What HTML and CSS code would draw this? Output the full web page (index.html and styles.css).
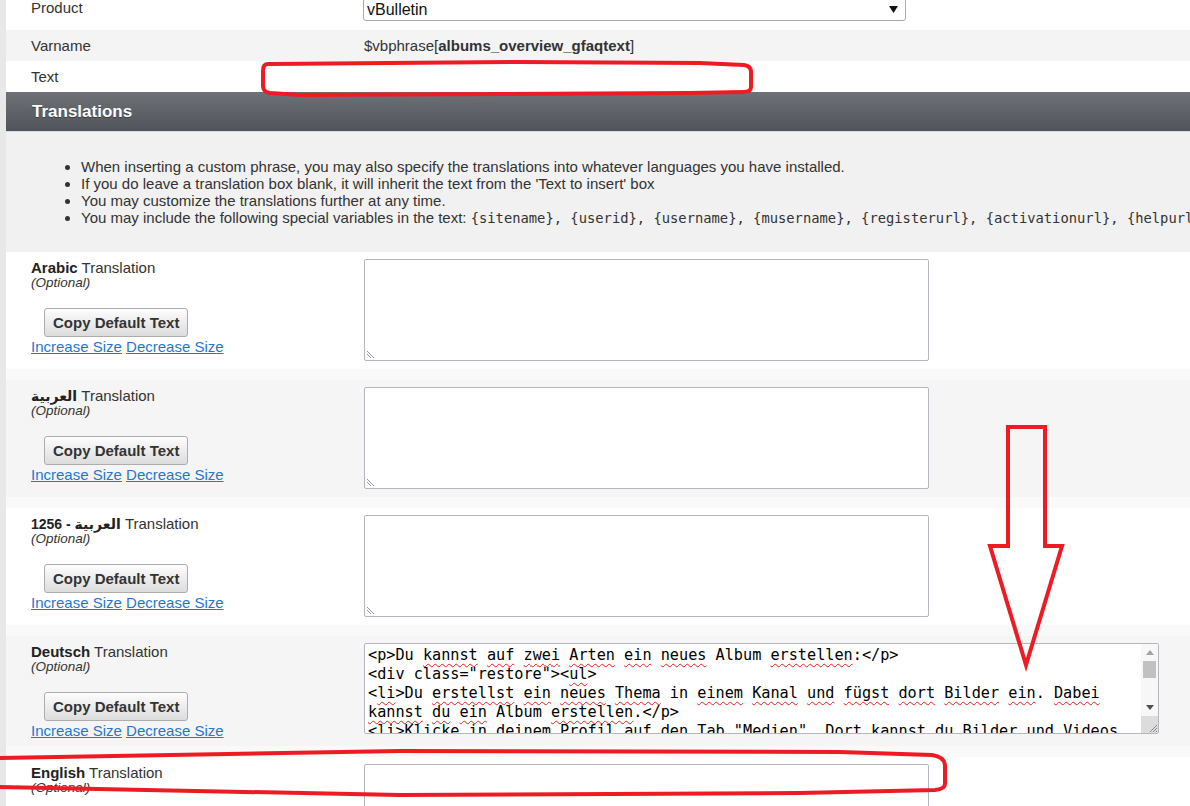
FILE: index.html
```html
<!DOCTYPE html>
<html lang="en">
<head>
<meta charset="utf-8">
<title>Add Phrase</title>
<link rel="stylesheet" href="styles.css">
</head>
<body>
<div class="page">
  <div class="frow product">
    <div class="lbl">Product</div>
    <div class="val">
      <div class="select"><span>vBulletin</span><svg class="caret" width="9" height="7" viewBox="0 0 9 7"><path d="M0 0 H9 L4.5 7 Z" fill="#111"/></svg></div>
    </div>
  </div>
  <div class="frow alt">
    <div class="lbl">Varname</div>
    <div class="val">$vbphrase[<b>albums_overview_gfaqtext</b>]</div>
  </div>
  <div class="frow">
    <div class="lbl">Text</div>
    <div class="val"></div>
  </div>

  <div class="header">Translations</div>

  <div class="desc">
    <ul>
      <li>When inserting a custom phrase, you may also specify the translations into whatever languages you have installed.</li>
      <li>If you do leave a translation box blank, it will inherit the text from the 'Text to insert' box</li>
      <li>You may customize the translations further at any time.</li>
      <li>You may include the following special variables in the text: <code>{sitename}, {userid}, {username}, {musername}, {registerurl}, {activationurl}, {helpurl}, {contactusurl}</code></li>
    </ul>
  </div>

  <div class="trow">
    <div class="tlabel">
      <div class="name"><b>Arabic</b> Translation</div>
      <div class="opt">(Optional)</div>
      <button class="copy" type="button">Copy Default Text</button>
      <div class="links"><a href="#">Increase Size</a> <a href="#">Decrease Size</a></div>
    </div>
    <div class="tval">
      <div class="ta rtl"><svg class="grip-l" width="8" height="7" viewBox="0 0 8 7"><path d="M0 0 L7 7 M0 3 L4 7" stroke="#9a9a9a" stroke-width="1"/></svg></div>
    </div>
  </div>

  <div class="trow alt">
    <div class="tlabel">
      <div class="name"><b class="ar">العربية</b> Translation</div>
      <div class="opt">(Optional)</div>
      <button class="copy" type="button">Copy Default Text</button>
      <div class="links"><a href="#">Increase Size</a> <a href="#">Decrease Size</a></div>
    </div>
    <div class="tval">
      <div class="ta rtl"><svg class="grip-l" width="8" height="7" viewBox="0 0 8 7"><path d="M0 0 L7 7 M0 3 L4 7" stroke="#9a9a9a" stroke-width="1"/></svg></div>
    </div>
  </div>

  <div class="trow">
    <div class="tlabel">
      <div class="name"><b class="ar">العربية - 1256</b> Translation</div>
      <div class="opt">(Optional)</div>
      <button class="copy" type="button">Copy Default Text</button>
      <div class="links"><a href="#">Increase Size</a> <a href="#">Decrease Size</a></div>
    </div>
    <div class="tval">
      <div class="ta rtl"><svg class="grip-l" width="8" height="7" viewBox="0 0 8 7"><path d="M0 0 L7 7 M0 3 L4 7" stroke="#9a9a9a" stroke-width="1"/></svg></div>
    </div>
  </div>

  <div class="trow alt">
    <div class="tlabel">
      <div class="name"><b>Deutsch</b> Translation</div>
      <div class="opt">(Optional)</div>
      <button class="copy" type="button">Copy Default Text</button>
      <div class="links"><a href="#">Increase Size</a> <a href="#">Decrease Size</a></div>
    </div>
    <div class="tval">
      <div class="ta wide">
        <div class="code">&lt;p&gt;Du <s>kannst</s> <s>auf</s> <s>zwei</s> <s>Arten</s> <s>ein</s> <s>neues</s> Album <s>erstellen</s>:&lt;/p&gt;
&lt;div class="restore"&gt;&lt;<s>ul</s>&gt;
&lt;<s>li</s>&gt;Du <s>erstellst</s> <s>ein</s> <s>neues</s> <s>Thema</s> in <s>einem</s> <s>Kanal</s> <s>und</s> <s>fügst</s> <s>dort</s> <s>Bilder</s> <s>ein</s>. <s>Dabei</s>
<s>kannst</s> <s>du</s> <s>ein</s> Album <s>erstellen</s>.&lt;/p&gt;
&lt;<s>li</s>&gt;<s>Klicke</s> in <s>deinem</s> <s>Profil</s> <s>auf</s> <s>den</s> Tab "<s>Medien</s>". Dort <s>kannst</s> <s>du</s> <s>Bilder</s> <s>und</s> <s>Videos</s></div>
        <div class="sbar">
          <div class="sbtn"><svg width="8" height="5" viewBox="0 0 8 5"><path d="M4 0 L8 5 H0 Z" fill="#a3a3a3"/></svg></div>
          <div class="strack"><div class="sthumb"></div></div>
          <div class="sbtn"><svg width="8" height="5" viewBox="0 0 8 5"><path d="M0 0 H8 L4 5 Z" fill="#505050"/></svg></div>
          <div class="scorner"><svg width="10" height="10" viewBox="0 0 10 10"><path d="M9 2 L2 9 M9 5 L5 9 M9 8 L8 9" stroke="#8a8a8a" stroke-width="1"/></svg></div>
        </div>
      </div>
    </div>
  </div>

  <div class="trow">
    <div class="tlabel">
      <div class="name"><b>English</b> Translation</div>
      <div class="opt">(Optional)</div>
      <button class="copy" type="button">Copy Default Text</button>
      <div class="links"><a href="#">Increase Size</a> <a href="#">Decrease Size</a></div>
    </div>
    <div class="tval">
      <div class="ta"></div>
    </div>
  </div>
</div>

<svg class="marks" width="1190" height="806" viewBox="0 0 1190 806">
  <g fill="none" stroke="#ed1c24" stroke-width="4" stroke-linejoin="round">
    <path d="M268 64 L520 62 L700 63 L744 65 Q751 66 751 72 L751 87 Q751 92 744 92 L690 93 L300 95 L270 93 Q263 92 263 86 L263 71 Q263 64 268 64 Z"/>
    <path d="M1008 427 L1045 427 L1045 546 L1062 546 L1026 665 L990 546 L1008 546 Z" stroke-linejoin="miter"/>
    <path d="M-6 758 L400 751 L840 752 L932 755 Q945 757 945 766 L945 784 Q945 789 935 790 L800 793 L400 795 L-6 787"/>
  </g>
</svg>
</body>
</html>
```
FILE: styles.css
```css
html {
  overflow: hidden;
}
body {
  margin: 0;
  background: #e8e8e8;
  font-family: "Liberation Sans", Arial, "DejaVu Sans", sans-serif;
  font-size: 15px;
  color: #333;
  position: relative;
  width: 1190px;
  height: 806px;
}
.page {
  margin-left: 6px;
  margin-top: -10px;
  background: #fff;
}

/* top form rows */
.frow {
  display: grid;
  grid-template-columns: 350px 1fr;
  align-items: center;
  height: 31px;
  background: #fff;
}
.frow.alt {
  background: #f4f4f4;
}
.frow .lbl {
  padding-left: 25px;
  line-height: 17px;
}
.frow .val {
  padding-left: 8px;
  line-height: 17px;
  color: #333;
}
.frow.product {
  height: 40px;
  align-items: start;
}
.frow.product .lbl {
  padding-top: 9px;
}
.select {
  margin-top: 8px;
  margin-left: -1px;
  width: 543px;
  height: 23px;
  box-sizing: border-box;
  border: 1px solid #a9a9a9;
  border-radius: 3px;
  background: #fff;
  display: flex;
  align-items: center;
  justify-content: space-between;
  padding: 0 7px 0 3px;
  color: #111;
  font-size: 16px;
}

/* header */
.header {
  height: 40px;
  line-height: 40px;
  padding-left: 26px;
  background: linear-gradient(#6e7176, #50535a);
  color: #fff;
  font-weight: bold;
  font-size: 17px;
  text-shadow: 0 1px 0 #3a3c40;
  border-bottom: 1px solid #d9dadc;
  box-sizing: border-box;
}

/* description */
.desc {
  background: #f1f1f1;
  height: 120px;
  box-sizing: border-box;
  padding: 26px 0 0 35px;
  overflow: hidden;
  white-space: nowrap;
}
.desc ul {
  margin: 0;
  padding-left: 40px;
  line-height: 17px;
  color: #333;
}
.desc code {
  font-family: "DejaVu Sans Mono", "Liberation Mono", monospace;
  font-size: 13.8px;
}

/* translation rows */
.trow {
  display: grid;
  grid-template-columns: 350px 1fr;
  background: #fff;
  border-bottom: 11px solid #f9f9f9;
}
.trow.alt {
  background: #f5f5f5;
}
.tlabel {
  padding: 8px 8px 7px 25px;
}
.tlabel .name {
  height: 15px;
  line-height: 15px;
  color: #333;
  white-space: nowrap;
}
.tlabel .name b {
  color: #222;
}
.tlabel .name b.ar {
  font-size: 14px;
}
.tlabel .opt {
  font-style: italic;
  font-size: 13.5px;
  line-height: 15px;
  color: #333;
}
.copy {
  display: block;
  margin: 18px 0 1px 13px;
  height: 29px;
  padding: 0 8px;
  border: 1px solid #adadad;
  border-radius: 3px;
  background: linear-gradient(#fdfdfd, #dcdcdc);
  font-family: "Liberation Sans", Arial, sans-serif;
  font-weight: bold;
  font-size: 15px;
  color: #333;
}
.links {
  line-height: 17px;
}
.links a {
  color: #1f78d1;
  text-decoration: underline;
}
.tval {
  padding: 7px 8px 8px 8px;
}
.ta {
  position: relative;
  width: 565px;
  height: 102px;
  box-sizing: border-box;
  border: 1px solid #b6b6be;
  border-radius: 2px;
  background: #fff;
  overflow: hidden;
}
.grip-l {
  position: absolute;
  left: 2px;
  bottom: 2px;
}
.ta.wide {
  width: 795px;
  height: 91px;
}
.code {
  padding: 2px 20px 0 3px;
  white-space: pre;
  font-family: "DejaVu Sans Mono", "Liberation Mono", monospace;
  font-size: 15.2px;
  line-height: 19px;
  color: #000;
}
.code s {
  text-decoration: underline wavy #e02020;
  text-decoration-thickness: 1px;
  text-underline-offset: 3px;
}
.sbar {
  position: absolute;
  top: 0;
  right: 0;
  bottom: 0;
  width: 17px;
  display: flex;
  flex-direction: column;
  background: #f7f7f7;
}
.sbtn {
  height: 17px;
  display: flex;
  align-items: center;
  justify-content: center;
}
.strack {
  flex: 1;
  padding: 0 2px;
}
.sthumb {
  height: 17px;
  background: #c1c1c1;
}
.scorner {
  height: 17px;
  background: #dcdcdc;
  display: flex;
  align-items: flex-end;
  justify-content: flex-end;
}

/* annotations */
.marks {
  position: absolute;
  left: 0;
  top: 0;
  pointer-events: none;
}
```
